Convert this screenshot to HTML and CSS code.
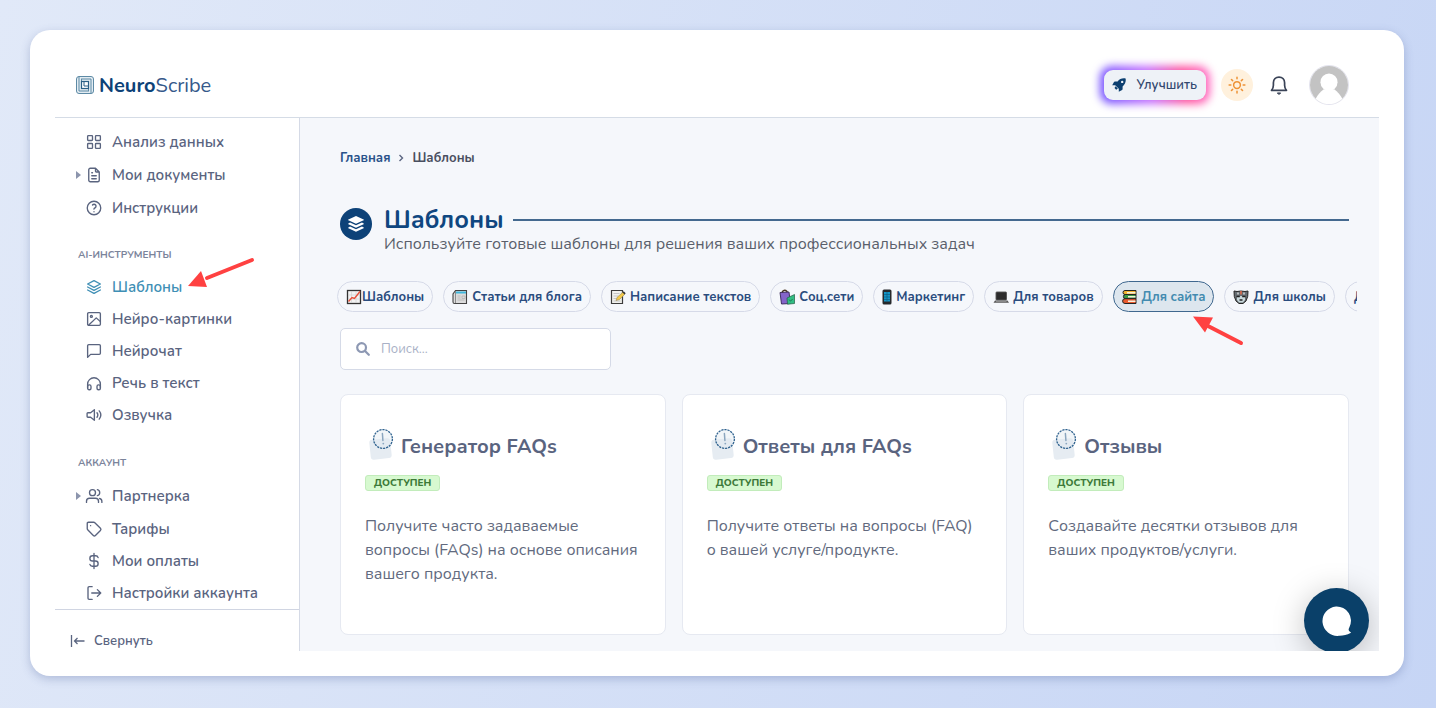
FILE: index.html
```html
<!DOCTYPE html>
<html lang="ru">
<head>
<meta charset="utf-8">
<meta name="viewport" content="width=device-width, initial-scale=1">
<title>NeuroScribe – Шаблоны</title>
<link rel="stylesheet" href="styles.css">
</head>
<body>
<svg class="sprite" aria-hidden="true">
  <symbol id="card-icon" viewBox="0 0 28 34">
    <rect x="3" y="12" width="21" height="20" rx="3" fill="#e6ecf2" transform="rotate(-6 13 22)"/>
    <circle cx="16" cy="12" r="9.4" fill="#dfe8f0" fill-opacity=".45" stroke="#2f628f" stroke-width="1.3" stroke-dasharray="2.2 .9"/>
    <path d="M15.400 6.500l.5 7" stroke="#8ba6bf" stroke-width="1.500" stroke-linecap="round"/>
    <circle cx="16.300" cy="16.600" r=".9" fill="#8ba6bf"/>
  </symbol>
</svg>
<div class="frame">
  <div class="app">
    <header class="header">
      <a class="logo" href="#">
        <svg width="20" height="20" viewBox="0 0 20 20" fill="none" stroke="#5d8aa5" stroke-width="1"><rect x="1.500" y="1.500" width="17" height="17" rx="2.500" fill="#e3ecf2"/><path d="M4 1.500V16H14M16 18.500V4H6"/><path d="M6.500 4v9.500h7.200M13.500 16V6.500H6.500"/><rect x="6.500" y="6.500" width="7" height="7" fill="#fff" stroke="#2b5f86" stroke-width="1.200"/><path d="M9 6.500V11h4.500" stroke="#2b5f86"/></svg>
        <span class="logo-text"><b>Neuro</b>Scribe</span>
      </a>
      <div class="header-actions">
        <button class="upgrade" type="button">
          <svg width="14" height="14" viewBox="0 0 14 14" fill="#0c3f70"><path fill-rule="evenodd" d="M13.600.4C10.300-.2 7.500.9 5.600 3.400H2.900c-.4 0-.7.2-.9.500L.2 7.200h3l3.600 3.600v3l3.300-1.800c.3-.2.5-.5.5-.9V8.400C13.100 6.500 14.200 3.700 13.600.4zM10.200 5.100a1.200 1.200 0 1 1 0-2.400 1.200 1.200 0 0 1 0 2.400z"/><path d="M3.600 8.200l2.300 2.300-1.700 1.200-1.700-1.700z"/></svg>
          <span>Улучшить</span>
        </button>
        <button class="theme" type="button" aria-label="Тема"><svg width="18" height="18" viewBox="0 0 24 24" fill="none" stroke="#ee9236" stroke-width="2" stroke-linecap="round"><circle cx="12" cy="12" r="4.500"/><path d="M12 1.500v2.300M12 20.200v2.300M1.500 12h2.300M20.200 12h2.300M4.600 4.600l1.600 1.600M17.800 17.800l1.600 1.600M4.600 19.400l1.600-1.600M17.800 6.200l1.600-1.600"/></svg></button>
        <button class="bell" type="button" aria-label="Уведомления"><svg width="20" height="22" viewBox="0 0 20 22" fill="none" stroke="#3a4357" stroke-width="1.700" stroke-linejoin="round" stroke-linecap="round"><path d="M2.500 16.300h15c-1.200-1.200-1.900-2.700-1.900-5V8.700c0-3.400-2.300-5.600-5.600-5.600s-5.600 2.200-5.600 5.600v2.600c0 2.300-.7 3.800-1.900 5z"/><path d="M8.500 19.300a1.600 1.300 0 0 0 3 0z" fill="#3a4357" stroke-width="1"/></svg></button>
        <button class="avatar" type="button" aria-label="Профиль"><svg viewBox="0 0 40 40"><circle cx="20" cy="20" r="20" fill="#c3c3c3"/><circle cx="20" cy="17" r="9" fill="#fff"/><path d="M6 34.500c2-4 5-7.500 8.500-10h11c3.500 2.500 6.500 6 8.500 10A20 20 0 0 1 6 34.500z" fill="#fff"/></svg></button>
      </div>
    </header>
    <div class="body">
      <aside class="sidebar">
        <nav class="nav">
          <a class="item" href="#"><i></i><svg viewBox="0 0 24 24"><rect x="3.500" y="3.500" width="6.500" height="6.500" rx="1"/><rect x="14" y="3.500" width="6.500" height="6.500" rx="1"/><rect x="3.500" y="14" width="6.500" height="6.500" rx="1"/><rect x="14" y="14" width="6.500" height="6.500" rx="1"/></svg><span>Анализ данных</span></a>
          <a class="item expandable" href="#"><i></i><svg viewBox="0 0 24 24"><path d="M14 3v4a1 1 0 0 0 1 1h4M17 21H7a2 2 0 0 1-2-2V5a2 2 0 0 1 2-2h7l5 5v11a2 2 0 0 1-2 2zM9 9h1M9 13h6M9 17h6"/></svg><span>Мои документы</span></a>
          <a class="item" href="#"><i></i><svg viewBox="0 0 24 24"><circle cx="12" cy="12" r="9"/><path d="M12 17v.01M12 13.500a1.500 1.500 0 0 1 1-1.500 2.600 2.600 0 1 0-3-4"/></svg><span>Инструкции</span></a>
          <h2 class="group">AI-ИНСТРУМЕНТЫ</h2>
          <a class="item active" href="#"><i></i><svg viewBox="0 0 24 24"><path d="M12 3.500L3.500 8l8.500 4.500L20.500 8zM3.500 12l8.500 4.500 8.500-4.500M3.500 16l8.500 4.500 8.500-4.500"/></svg><span>Шаблоны</span></a>
          <a class="item" href="#"><i></i><svg viewBox="0 0 24 24"><rect x="3.500" y="3.500" width="17" height="17" rx="1.500"/><circle cx="8.500" cy="8.500" r="1.300"/><path d="M5 20l10-9.500 5.500 5"/></svg><span>Нейро-картинки</span></a>
          <a class="item" href="#"><i></i><svg viewBox="0 0 24 24"><path d="M3.500 20.500V5A1.500 1.500 0 0 1 5 3.500h14A1.500 1.500 0 0 1 20.500 5v10a1.500 1.500 0 0 1-1.500 1.500H7.500z"/></svg><span>Нейрочат</span></a>
          <a class="item" href="#"><i></i><svg viewBox="0 0 24 24"><path d="M3.500 18v-4.500a8.500 8.500 0 0 1 17 0V18"/><rect x="3.500" y="14.500" width="4.500" height="6.500" rx="2"/><rect x="16" y="14.500" width="4.500" height="6.500" rx="2"/></svg><span>Речь в текст</span></a>
          <a class="item" href="#"><i></i><svg viewBox="0 0 24 24"><path d="M12.500 5v14l-5-4H3.800a1 1 0 0 1-1-1v-4a1 1 0 0 1 1-1h3.700zM16 9a5 5 0 0 1 0 6M19 6.500a9 9 0 0 1 0 11"/></svg><span>Озвучка</span></a>
          <h2 class="group">АККАУНТ</h2>
          <a class="item expandable" href="#"><i></i><svg viewBox="0 0 24 24"><circle cx="10" cy="7.500" r="4"/><path d="M2 20.500V19a4 4 0 0 1 4-4h8a4 4 0 0 1 4 4v1.500M16.500 3.600a4 4 0 0 1 0 7.800M19.500 15.300a4 4 0 0 1 3 3.900v1.300"/></svg><span>Партнерка</span></a>
          <a class="item" href="#"><i></i><svg viewBox="0 0 24 24"><path d="M3 4.500A1.500 1.500 0 0 1 4.500 3h7.200a2 2 0 0 1 1.400.6l7.500 7.500a2 2 0 0 1 0 2.800l-6.700 6.700a2 2 0 0 1-2.800 0l-7.500-7.500a2 2 0 0 1-.6-1.400zM7.500 7.500h.01"/></svg><span>Тарифы</span></a>
          <a class="item" href="#"><i></i><svg viewBox="0 0 24 24"><path d="M17.500 7.500A3.500 3.500 0 0 0 14 5h-4a3.400 3.400 0 0 0 0 7h4a3.400 3.400 0 0 1 0 7h-4a3.500 3.500 0 0 1-3.500-2.500M12 2v20"/></svg><span>Мои оплаты</span></a>
          <a class="item" href="#"><i></i><svg viewBox="0 0 24 24"><path d="M9.500 3.500h-4a1.500 1.500 0 0 0-1.500 1.500v14a1.500 1.500 0 0 0 1.500 1.500h4M9 12h12M16.500 7.500L21 12l-4.500 4.500"/></svg><span>Настройки аккаунта</span></a>
        </nav>
        <button class="collapse" type="button"><svg width="15" height="14" viewBox="0 0 15 14" fill="none" stroke="#5b6681" stroke-width="1.300"><path d="M1.500 1v12M14.500 7H4.500M7.500 4l-3 3 3 3"/></svg><span>Свернуть</span></button>
      </aside>
      <main class="main">
        <nav class="crumbs"><a href="#">Главная</a><svg width="6" height="8" viewBox="0 0 6 8" fill="none" stroke="#5b6681" stroke-width="1.400"><path d="M1.500 1l3 3-3 3"/></svg><span>Шаблоны</span></nav>
        <div class="heading">
          <div class="heading-icon"><svg width="18" height="18" viewBox="0 0 18 18" fill="#fff"><path d="M9 1l7.600 3.400c.5.200.5.700 0 .9L9 8.700 1.400 5.300c-.5-.2-.5-.7 0-.9zM3 7.600l6 2.700 6-2.700 1.600.8c.5.200.5.600 0 .8L9 12.700 1.400 9.200c-.5-.2-.5-.6 0-.8zM3 11.600l6 2.700 6-2.700 1.600.8c.5.200.5.600 0 .8L9 16.700l-7.600-3.500c-.5-.2-.5-.6 0-.8z"/></svg></div>
          <div class="heading-text">
            <div class="title-row"><h1>Шаблоны</h1><span class="rule"></span></div>
            <p>Используйте готовые шаблоны для решения ваших профессиональных задач</p>
          </div>
        </div>
        <div class="chips">
          <button class="chip tight" type="button"><svg viewBox="0 0 16 16"><rect x="1.500" y="1.500" width="13" height="13" fill="#f3f3f3" stroke="#333" stroke-width="1.300"/><path d="M5.500 2v12M10 2v12M2 6h12M2 10h12" stroke="#ccc" stroke-width=".6"/><path d="M2.500 12.500l3.500-4 2.500 1 5.500-7" fill="none" stroke="#e8503a" stroke-width="1.400"/></svg>Шаблоны</button>
          <button class="chip" type="button"><svg viewBox="0 0 16 16"><path d="M3.500 1.500h11v13h-12a1.500 1.500 0 0 1-1.500-1.500V5l2.500-3.500z" fill="#dcdcdc" stroke="#444" stroke-width="1.100"/><path d="M4 2.500h10v2H4z" fill="#3fb6dc"/><path d="M3.500 2v12" stroke="#777" stroke-width=".8"/><path d="M5.500 7h3M5.500 9h3M5.500 11h7M10 7h3v2.500h-3z" stroke="#b5b5b5" stroke-width=".8" fill="none"/></svg>Статьи для блога</button>
          <button class="chip" type="button"><svg viewBox="0 0 16 16"><path d="M1.500 1.500h11v13h-11z" fill="#f1f1ed" stroke="#3c3c3c" stroke-width="1.200"/><path d="M3.500 4.500h6M3.500 7h5M3.500 9.500h3M3.500 12h7" stroke="#bbb" stroke-width=".8"/><path d="M6 11.500l1-3L13 3l2 2-5.500 5.500z" fill="#f3c94a" stroke="#8a7a45" stroke-width=".5"/><path d="M12.500 3.500l1.200-1.300 2 2L14.500 5.500z" fill="#333"/></svg>Написание текстов</button>
          <button class="chip" type="button"><svg viewBox="0 0 16 16"><path d="M3.500 4V2.500Q5.500 0 8 2.500V5" fill="none" stroke="#4a3520" stroke-width="1.500"/><path d="M1 3.500l9-.5 1.500 11.500-9 .5z" fill="#8464c9" stroke="#342453" stroke-width=".9"/><path d="M8 9l7.500-3.500v9l-7 .7z" fill="#31bd83" stroke="#245c45" stroke-width=".7"/><path d="M10 10.500q1.500 3 3.500-.5" fill="none" stroke="#1d7650" stroke-width=".9"/></svg>Соц.сети</button>
          <button class="chip" type="button"><svg class="narrow" viewBox="0 0 10 16"><rect x=".5" y=".5" width="9" height="15" rx="1.500" fill="#26292c"/><path d="M2 3h6v9.500H2z" fill="#1495c7"/><path d="M2 5.500h6M2 8h6M2 10.500h6M5 3v9" stroke="#0b5f84" stroke-width=".7"/></svg>Маркетинг</button>
          <button class="chip" type="button"><svg viewBox="0 0 16 16"><rect x="3" y="3" width="10.500" height="8" rx=".7" fill="#2c2c2c" stroke="#555" stroke-width=".9"/><path d="M2 11.500h12.500l1.500 2.300H.5z" fill="#575757"/><path d="M3 12.400h10.500" stroke="#bbb" stroke-width=".6"/></svg>Для товаров</button>
          <button class="chip selected" type="button"><svg viewBox="0 0 16 16"><g stroke="#222" stroke-width="1"><path d="M3 1.500h11v4H3a2 2 0 0 1 0-4z" fill="#f3b52f"/><path d="M3.500 5.500H14v4.200H3.500a2 2 0 0 1 0-4.200z" fill="#3c9b46"/><path d="M3 9.700h11v4.800H3a2.300 2.300 0 0 1 0-4.800z" fill="#ea5b2f"/></g><path d="M5 3h8.500v1.400H5zM6 7h7.500v1.400H6zM6 11.500h7.500v1.600H6z" fill="#f5f1df"/></svg>Для сайта</button>
          <button class="chip" type="button"><svg viewBox="0 0 16 16"><path d="M1 2l3 .5L8 2l4 .5L15 2l-.3 5.500L13 12l-3 2.500H6L3 12 1.300 7.500z" fill="#666d72" stroke="#262626" stroke-width="1"/><path d="M4 8q4-2 8 0v3l-2 2.500H6L4 11z" fill="#c9d9dc"/><path d="M8 2v3.500" stroke="#e1694a" stroke-width="1.600"/><path d="M5 3.500v2M11 3.500v2" stroke="#f1f1f1" stroke-width="1.200"/><path d="M3.500 7.500h3.300M9.200 7.500h3.300M6.500 11h3" stroke="#222" stroke-width="1.600"/></svg>Для школы</button>
          <button class="chip" type="button">Для</button>
        </div>
        <label class="search"><svg width="14" height="14" viewBox="0 0 14 14" fill="none" stroke="#8d98b3" stroke-width="2.200" stroke-linecap="round"><circle cx="5.600" cy="5.600" r="4.400"/><path d="M9 9l3.800 3.800"/></svg><input type="search" placeholder="Поиск..." aria-label="Поиск"></label>
        <div class="cards">
          <article class="card"><div class="card-head"><svg width="28" height="34"><use href="#card-icon"/></svg><h3>Генератор FAQs</h3></div><span class="badge">ДОСТУПЕН</span><p>Получите часто задаваемые вопросы (FAQs) на основе описания вашего продукта.</p></article>
          <article class="card"><div class="card-head"><svg width="28" height="34"><use href="#card-icon"/></svg><h3>Ответы для FAQs</h3></div><span class="badge">ДОСТУПЕН</span><p>Получите ответы на вопросы (FAQ) о вашей услуге/продукте.</p></article>
          <article class="card"><div class="card-head"><svg width="28" height="34"><use href="#card-icon"/></svg><h3>Отзывы</h3></div><span class="badge">ДОСТУПЕН</span><p>Создавайте десятки отзывов для ваших продуктов/услуги.</p></article>
        </div>
        <button class="chat" type="button" aria-label="Чат"><svg width="30" height="30" viewBox="0 0 30 30" fill="#fff"><path d="M14 .5a14.300 14.300 0 0 1 13.400 20.800c-.6 1.200-.9 2-.7 2.700.3 1 1 1.500 2 2.300.3.300.2.700-.2.800-3.500 1.800-7.500 2.800-11.500 2.700A15 14.700 0 0 1 14 .5z"/></svg></button>
      </main>
    </div>
  </div>
  <svg class="arrow arrow-menu" viewBox="0 0 68 32"><path d="M65 3L20 21" stroke="#ff4141" stroke-width="4" stroke-linecap="round"/><path d="M1 29l13-15 6 16z" fill="#ff4141"/></svg>
  <svg class="arrow arrow-chip" viewBox="0 0 52 32"><path d="M49 28L16 11" stroke="#ff4141" stroke-width="4" stroke-linecap="round"/><path d="M1 1.500l20 1-8 15z" fill="#ff4141"/></svg>
</div>
</body>
</html>
```

FILE: styles.css
```css
* { box-sizing: border-box; margin: 0; padding: 0; }
body { min-height: 100vh; padding: 30px 32px 32px 30px; display: flex; background: linear-gradient(105deg, #e1e9f8 0%, #c6d5f5 100%); font-family: Nunito, "Open Sans", "Noto Sans", sans-serif; color: #5a647f; }
button { font: inherit; border: 0; background: none; cursor: pointer; }
a { color: inherit; text-decoration: none; }
.sprite { position: absolute; width: 0; height: 0; }
.frame { position: relative; flex: 1; min-width: 0; height: calc(100vh - 62px); padding: 25px; border-radius: 20px; background: #fff; box-shadow: 0 3px 10px rgba(70, 90, 150, .3); }
.app { height: 100%; display: flex; flex-direction: column; overflow: hidden; }

.header { flex: none; height: 63px; padding: 0 30px 2px 20px; display: flex; align-items: center; justify-content: space-between; border-bottom: 1px solid #d5dce6; }
.logo { display: flex; align-items: center; gap: 4px; color: #36598a; font-size: 20px; }
.logo b { color: #0d4278; }
.header-actions { position: relative; z-index: 0; display: flex; align-items: center; }
.upgrade { position: relative; display: flex; align-items: center; gap: 10px; height: 30px; padding: 0 9px 0 8px; margin-right: 15px; border-radius: 9px; background: #eef2f7; color: #33496f; font-size: 13px; font-weight: 600; }
.upgrade::before { content: ""; position: absolute; z-index: -1; inset: -4px; border-radius: 12px; background: linear-gradient(80deg, #6a4dff, #c36bff 45%, #ff4f9a 75%, #ff6ec9); filter: blur(4px); }
.theme { width: 32px; height: 32px; display: grid; place-items: center; border-radius: 50%; background: #fff1dd; }
.bell { width: 20px; height: 22px; margin: 0 20px 0 16px; }
.avatar { width: 40px; height: 40px; border: 1px solid #e3e3ee; border-radius: 50%; }
.avatar svg, .bell svg { display: block; }

.body { flex: 1; min-height: 0; display: flex; }
.sidebar { flex: none; width: 245px; display: flex; flex-direction: column; border-right: 1px solid #d5dae6; }
.nav { flex: 1; min-height: 0; overflow: hidden; padding-top: 8px; }
.item { height: 32px; padding-left: 21px; display: flex; align-items: center; font-size: 15px; font-weight: 600; white-space: nowrap; }
.item svg { width: 18px; height: 18px; margin-right: 9px; fill: none; stroke: currentColor; stroke-width: 1.8; stroke-linecap: round; stroke-linejoin: round; }
.item i { width: 9px; }
.expandable { height: 34px; }
.expandable i::before { content: ""; display: block; width: 0; border: 4px solid transparent; border-left: 5px solid #8c95ad; border-right: 0; }
.active { color: #3f8fb5; }
.group { padding: 23px 0 8px 23px; font-size: 10px; line-height: 16px; font-weight: 700; color: #7b849b; }
.active ~ .group { padding-top: 24px; }
.collapse { flex: none; display: flex; align-items: flex-start; gap: 9px; height: 42px; padding: 22px 0 0 15px; border-top: 1px solid #d0d5e2; color: #5a647f; font-size: 13px; line-height: 18px; font-weight: 600; }
.collapse svg { margin-top: 2px; }

.main { position: relative; flex: 1; min-width: 0; overflow: hidden; padding: 31px 30px 0 40px; background: #f5f7fb; }
.crumbs { display: flex; align-items: center; gap: 8px; font-size: 13px; line-height: 18px; font-weight: 700; color: #4a4f60; }
.crumbs a { color: #2a528a; }
.heading { display: flex; gap: 12px; margin-top: 38px; }
.heading-icon { flex: none; width: 32px; height: 32px; margin-top: 3px; display: grid; place-items: center; border-radius: 50%; background: #0d4278; }
.heading-text { flex: 1; min-width: 0; }
.title-row { display: flex; align-items: center; gap: 9px; height: 30px; }
h1 { font-size: 25px; line-height: 28px; color: #0f4680; }
.rule { flex: 1; height: 2px; background: #44698f; }
.heading p { font-size: 16px; line-height: 18px; color: #5a5f6b; }
.chips { display: flex; gap: 10px; margin: 28px -8px 0 -3px; overflow: hidden; }
.chip { flex: none; display: flex; align-items: center; gap: 4px; height: 31px; padding: 0 8px; border: 1px solid #d6dae8; border-radius: 16px; color: #2a4c7e; font-size: 13px; font-weight: 700; white-space: nowrap; }
.chip svg { width: 16px; height: 16px; }
.chip .narrow { width: 10px; }
.chip.tight { gap: 0; }
.selected { background: #dde6ee; border-color: #40688f; color: #438bb0; }
.search { display: flex; align-items: center; gap: 11px; width: 271px; height: 42px; margin-top: 16px; padding: 0 15px; background: #fff; border: 1px solid #d5dae7; border-radius: 5px; }
.search input { flex: 1; min-width: 0; border: 0; outline: 0; background: none; font: inherit; font-size: 13px; }
.search input::placeholder { color: #a9b1c6; opacity: 1; }
.cards { display: grid; grid-template-columns: repeat(3, 1fr); gap: 16px; margin-top: 24px; }
.card { height: 241px; padding: 32px 24px 0; background: #fff; border: 1px solid #e6e9f1; border-radius: 8px; }
.card-head { display: flex; align-items: center; gap: 6px; padding-left: 2px; }
.card h3 { padding-top: 5px; font-size: 20px; line-height: 28px; color: #5a647f; }
.badge { display: block; width: max-content; margin-top: 14px; padding: 0 8px; border: 1px solid #c2ecbb; border-radius: 3px; background: #d7f9d0; color: #3d7a39; font-size: 10px; line-height: 14px; font-weight: 800; }
.card p { margin-top: 23px; font-size: 16px; line-height: 24px; color: #626a7e; }
.chat { position: absolute; right: 10px; bottom: -2px; width: 65px; height: 65px; display: grid; place-items: center; border-radius: 50%; background: #0a4069; box-shadow: 0 6px 32px rgba(0, 0, 0, .25); }
.arrow { position: absolute; pointer-events: none; }
.arrow-menu { left: 157px; top: 227px; width: 68px; height: 32px; }
.arrow-chip { left: 1162px; top: 285px; width: 52px; height: 32px; }
```
